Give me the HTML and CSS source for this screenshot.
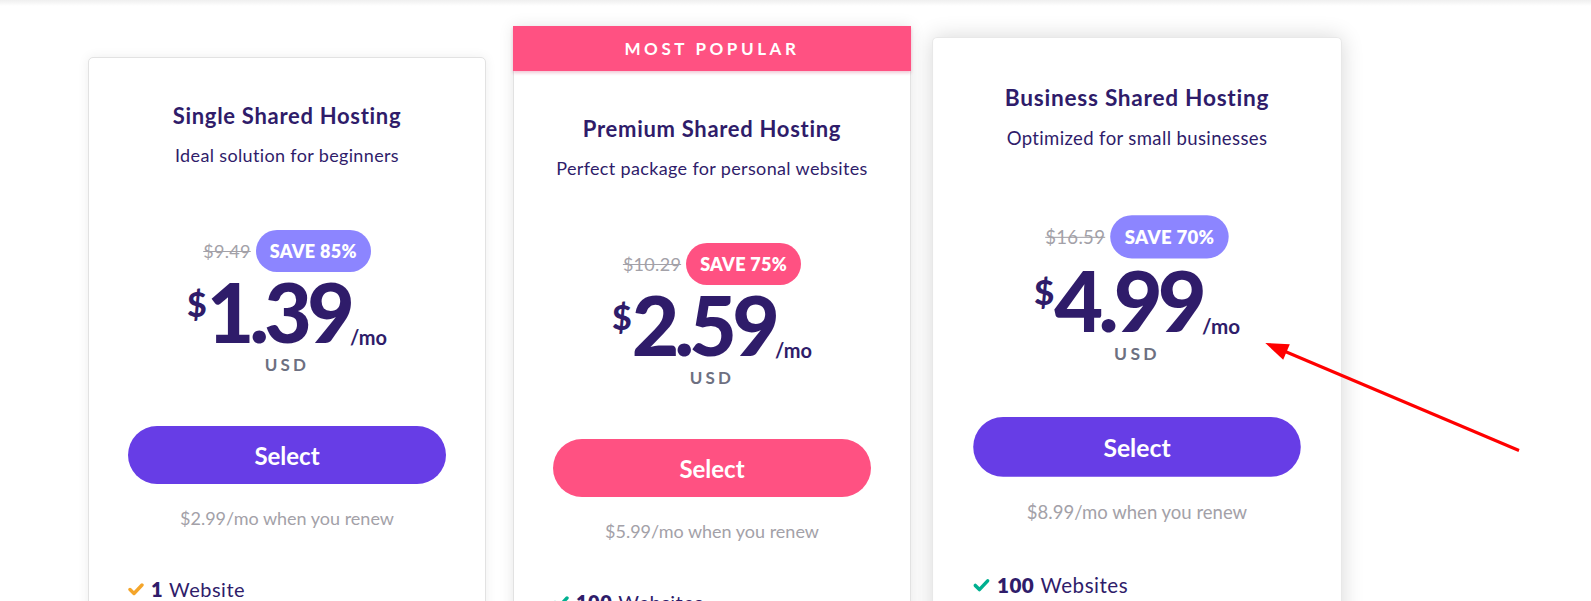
FILE: index.html
```html
<!DOCTYPE html>
<html lang="en">
<head>
<meta charset="utf-8">
<title>Hosting plans</title>
<link rel="stylesheet" href="styles.css">
</head>
<body>
<div class="topbar"></div>
<main class="plans">
  <section class="card card-single">
    <div class="card-body">
      <h2 class="title">Single Shared Hosting</h2>
      <p class="subtitle">Ideal solution for beginners</p>
      <div class="discount">
        <span class="old">$9.49</span>
        <span class="badge badge-violet">SAVE 85%</span>
      </div>
      <div class="price"><span class="cur">$</span><span class="amount">1.39</span><span class="per">/mo</span></div>
      <div class="usd">USD</div>
      <button class="select select-violet">Select</button>
      <p class="renew">$2.99/mo when you renew</p>
      <ul class="features">
        <li><svg class="check" viewBox="0 0 16 16"><path d="M2 8.5l4 4L14 4" fill="none" stroke="#f4a52a" stroke-width="3.4" stroke-linecap="round" stroke-linejoin="round"/></svg><b>1</b> Website</li>
      </ul>
    </div>
  </section>

  <section class="card card-popular">
    <div class="ribbon">MOST POPULAR</div>
    <div class="card-body">
      <h2 class="title">Premium Shared Hosting</h2>
      <p class="subtitle">Perfect package for personal websites</p>
      <div class="discount">
        <span class="old">$10.29</span>
        <span class="badge badge-pink">SAVE 75%</span>
      </div>
      <div class="price"><span class="cur">$</span><span class="amount">2.59</span><span class="per">/mo</span></div>
      <div class="usd">USD</div>
      <button class="select select-pink">Select</button>
      <p class="renew">$5.99/mo when you renew</p>
      <ul class="features">
        <li><svg class="check" viewBox="0 0 16 16"><path d="M2 8.5l4 4L14 4" fill="none" stroke="#00b090" stroke-width="3.4" stroke-linecap="round" stroke-linejoin="round"/></svg><b>100</b> Websites</li>
      </ul>
    </div>
  </section>

  <section class="card card-business">
    <div class="card-body">
      <h2 class="title">Business Shared Hosting</h2>
      <p class="subtitle">Optimized for small businesses</p>
      <div class="discount">
        <span class="old">$16.59</span>
        <span class="badge badge-violet">SAVE 70%</span>
      </div>
      <div class="price"><span class="cur">$</span><span class="amount">4.99</span><span class="per">/mo</span></div>
      <div class="usd">USD</div>
      <button class="select select-violet">Select</button>
      <p class="renew">$8.99/mo when you renew</p>
      <ul class="features">
        <li><svg class="check" viewBox="0 0 16 16"><path d="M2 8.5l4 4L14 4" fill="none" stroke="#00b090" stroke-width="3.4" stroke-linecap="round" stroke-linejoin="round"/></svg><b>100</b> Websites</li>
      </ul>
    </div>
  </section>
</main>
<svg class="arrow" width="1591" height="601" viewBox="0 0 1591 601">
  <line x1="1519" y1="450.5" x2="1284" y2="351" stroke="#ff0000" stroke-width="3"/>
  <polygon points="1265.3,343 1283.2,359.8 1289.8,344.2" fill="#ff0000"/>
</svg>
</body>
</html>
```
FILE: styles.css
```css
* { box-sizing: border-box; }
html, body { margin: 0; padding: 0; }
body {
  font-family: Lato, "Noto Sans", Arial, sans-serif;
  background: #ffffff;
  width: 1591px;
  height: 601px;
  overflow: hidden;
  position: relative;
}
.topbar {
  height: 6px;
  background: linear-gradient(#efefef, rgba(255,255,255,0));
}
.plans {
  display: flex;
  align-items: flex-start;
  gap: 27px;
  padding-left: 88px;
}
.card {
  flex: none;
  width: 398px;
  min-height: 760px;
  background: #fff;
  border-radius: 5px;
  border: 1px solid #e2e2e2;
  box-shadow: 0 0 12px rgba(0,0,0,0.07);
}
.card-single { margin-top: 51px; }
.card-popular {
  margin-top: 20px;
  border-radius: 0;
  border: none;
  box-shadow: 0 0 14px rgba(0,0,0,0.10);
}
.card-popular .card-body {
  border: 1px solid #e2e2e2;
  border-top: none;
  min-height: 700px;
}
.card-business {
  margin-top: 31px;
  transform: scale(1.03);
  transform-origin: top center;
  box-shadow: 0 0 22px rgba(0,0,0,0.16);
  border-color: #e8e8e8;
}
.ribbon {
  height: 45px;
  background: #ff5182;
  color: #fff;
  font-weight: 700;
  font-size: 17px;
  letter-spacing: 3.6px;
  display: flex;
  align-items: center;
  justify-content: center;
  box-shadow: 0 2px 3px rgba(200,40,90,0.25);
  position: relative;
}
.card-body {
  padding: 43px 39px 0;
  text-align: center;
  color: #2f1c6a;
}
.title {
  margin: 0;
  font-size: 22px;
  line-height: 30px;
  font-weight: 700;
  letter-spacing: 0.7px;
  color: #2f1c6a;
}
.subtitle {
  margin: 11px 0 0;
  font-size: 18px;
  line-height: 26px;
  letter-spacing: 0.35px;
  color: #2f1c6a;
}
.discount {
  margin-top: 62px;
  display: flex;
  justify-content: center;
  align-items: center;
  gap: 5px;
  height: 42px;
}
.old {
  font-size: 18px;
  letter-spacing: 0.3px;
  color: #a3a1a8;
  text-decoration: line-through;
}
.badge {
  height: 42px;
  border-radius: 21px;
  padding: 0 14px;
  display: inline-flex;
  align-items: center;
  color: #fff;
  font-weight: 800;
  font-size: 18px;
  letter-spacing: 0.3px;
}
.badge-violet { background: #8c85ff; }
.badge-pink { background: #ff5182; }
.price {
  display: flex;
  justify-content: center;
  margin-top: -2px;
  color: #2f1c6a;
  font-weight: 900;
  height: 82px;
}
.cur {
  align-self: flex-start;
  font-size: 34px;
  line-height: 34px;
  margin-top: 17px;
  margin-right: 0;
}
.amount {
  font-size: 82px;
  line-height: 82px;
  letter-spacing: -4.7px;
}
.per {
  align-self: flex-end;
  font-size: 20px;
  line-height: 20px;
  font-weight: 700;
  margin-left: 0;
  margin-bottom: 5px;
}
.usd {
  margin-top: 2px;
  font-size: 17px;
  line-height: 22px;
  font-weight: 700;
  letter-spacing: 3.2px;
  color: #6d7081;
}
.select {
  display: block;
  width: 100%;
  height: 58px;
  margin-top: 50px;
  border: none;
  border-radius: 29px;
  color: #fff;
  font-family: inherit;
  font-size: 24px;
  font-weight: 700;
  cursor: pointer;
}
.select-violet { background: #673de6; }
.select-pink { background: #ff5182; }
.renew {
  margin: 21px 0 0;
  font-size: 18px;
  line-height: 26px;
  color: #a3a1a8;
}
.features {
  list-style: none;
  margin: 44px 0 0;
  padding: 0;
  text-align: left;
}
.features li {
  display: flex;
  align-items: center;
  font-size: 20px;
  line-height: 28px;
  letter-spacing: 0.5px;
  color: #2f1c6a;
}
.features b { font-weight: 800; margin-right: 6px; }
.check {
  width: 16px;
  height: 16px;
  margin-right: 7px;
}
.arrow {
  position: absolute;
  left: 0;
  top: 0;
  pointer-events: none;
}
```
